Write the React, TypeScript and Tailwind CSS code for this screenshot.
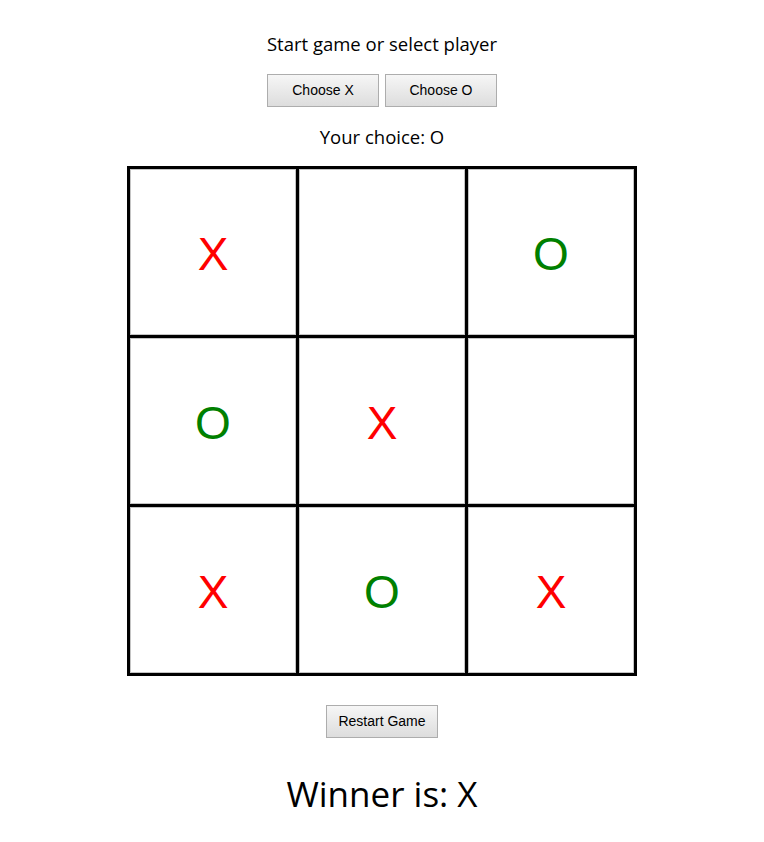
import { useState } from 'react';

type Mark = 'X' | 'O' | '';

const initial: Mark[] = ['X', '', 'O', 'O', 'X', '', 'X', 'O', 'X'];

export default function App() {
  const [board, setBoard] = useState<Mark[]>(initial);
  const [choice, setChoice] = useState<'X' | 'O'>('O');

  const btn =
    'h-[33px] w-[112px] border border-[#adadad] bg-gradient-to-b from-[#f6f6f6] to-[#dddddd] text-[14px] text-black font-["Liberation_Sans",Arial,sans-serif]';

  return (
    <div className='flex flex-col items-center bg-white min-h-[842px] font-["Open_Sans","Noto_Sans",sans-serif] text-black'>
      <p className="mt-[31px] text-[18.5px] leading-[26px]">Start game or select player</p>
      <div className="mt-[17px] flex gap-[6px]">
        <button className={btn} onClick={() => setChoice('X')}>Choose X</button>
        <button className={btn} onClick={() => setChoice('O')}>Choose O</button>
      </div>
      <p className="mt-[17px] text-[18.5px] leading-[26px]">Your choice: {choice}</p>

      <div className="mt-[16px] grid grid-cols-3 gap-[3px] bg-black border-[3px] border-black">
        {board.map((m, i) => (
          <div
            key={i}
            onClick={() => {
              if (m) return;
              const next = [...board];
              next[i] = choice;
              setBoard(next);
            }}
            className={`flex h-[166px] w-[166px] items-center justify-center border border-[#c4c4c4] bg-white pt-[4px] text-[46px] font-["Liberation_Sans",Arial,sans-serif] ${
              m === 'X' ? 'text-[#ff0000]' : 'text-[#008000]'
            }`}
          >
            {m}
          </div>
        ))}
      </div>

      <button className={`${btn} mt-[29px]`} onClick={() => setBoard(Array(9).fill(''))}>
        Restart Game
      </button>
      <p className="mt-[34px] text-[35px] leading-[44px]">Winner is: X</p>
    </div>
  );
}
